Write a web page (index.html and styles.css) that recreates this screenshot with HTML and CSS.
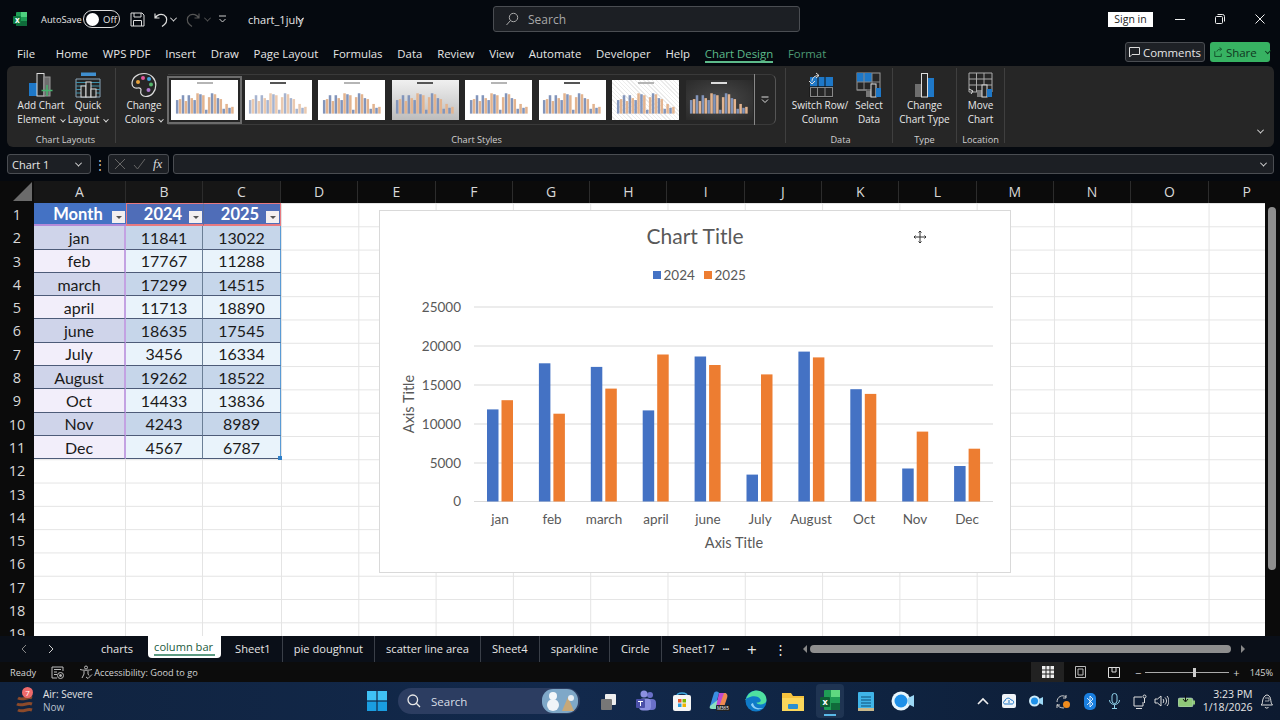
FILE: index.html
```html
<!DOCTYPE html>
<html lang="en">

<head>
    <meta charset="UTF-8" />
    <title>chart_1july - Excel</title>
    <link rel="stylesheet" href="styles.css">
</head>

<body>
    <!-- shared mini chart drawings for the style gallery -->
    <svg class="defs" width="0" height="0">
        <symbol id="bars" viewBox="0 0 64 26">
            <g class="b">
                <rect x="2" y="11" width="2.6" height="14" /><rect x="8" y="6" width="2.6" height="19" /><rect x="14" y="6" width="2.6" height="19" /><rect x="20" y="11" width="2.6" height="14" /><rect x="26" y="5" width="2.6" height="20" /><rect x="32" y="21" width="2.6" height="4" /><rect x="38" y="4" width="2.6" height="21" /><rect x="44" y="9" width="2.6" height="16" /><rect x="50" y="20" width="2.6" height="5" /><rect x="56" y="19" width="2.6" height="6" />
            </g>
            <g class="o">
                <rect x="5" y="10" width="2.6" height="15" /><rect x="11" y="12" width="2.6" height="13" /><rect x="17" y="9" width="2.6" height="16" /><rect x="23" y="4" width="2.6" height="21" /><rect x="29" y="6" width="2.6" height="19" /><rect x="35" y="8" width="2.6" height="17" /><rect x="41" y="5" width="2.6" height="20" /><rect x="47" y="10" width="2.6" height="15" /><rect x="53" y="15" width="2.6" height="10" /><rect x="59" y="18" width="2.6" height="7" />
            </g>
        </symbol>
    </svg>

    <!-- title bar -->
    <header class="titlebar">
        <svg class="xl-logo" width="14" height="14" viewBox="0 0 14 14"><rect x="3" y="0" width="11" height="14" rx="1" fill="#1f9d55" /><rect x="8" y="0" width="6" height="5" fill="#4fd17f" /><rect x="3" y="9" width="11" height="5" fill="#0f6b3a" /><rect x="0" y="4" width="8" height="8" rx="1" fill="#0d7a3f" /><text x="2" y="10.5" class="xl-x">x</text></svg>
        <span class="autosave">AutoSave</span>
        <span class="toggle"><i></i>Off</span>
        <svg class="qa-save" width="15" height="15" viewBox="0 0 15 15" fill="none" stroke="#ddd"><path d="M1 1h11l2 2v11H1z" /><path d="M4 1v4h7V1M3.500 14V8.500h8V14" /></svg>
        <svg class="qa-undo" width="15" height="15" viewBox="0 0 15 15" fill="none" stroke="#ddd" stroke-width="1.200"><path d="M1 1.500v4.500h4.500M1.300 6C3 2.500 7 1.500 10 3c3.500 2 3.500 7 .5 9.500L8 14.500" /></svg>
        <span class="chev qa-c1"></span>
        <svg class="qa-redo" width="15" height="15" viewBox="0 0 15 15" fill="none" stroke="#555" stroke-width="1.200"><path d="M14 1.500v4.500H9.500M13.700 6C12 2.500 8 1.500 5 3c-3.500 2-3.500 7-.5 9.500L7 14.500" /></svg>
        <span class="chev dim qa-c2"></span>
        <svg class="qa-more" width="9" height="8" viewBox="0 0 9 8" fill="none" stroke="#ccc"><path d="M1 1h7M1.500 4L4.500 7l3-3" /></svg>
        <span class="doc-name">chart_1july</span><span class="chev doc-chev"></span>
        <div class="search-box">
            <svg width="14" height="14" viewBox="0 0 14 14" fill="none" stroke="#aaa"><circle cx="8.500" cy="5.500" r="4.200" /><path d="M5.500 8.500L1.500 13" /></svg>
            <span>Search</span>
        </div>
        <span class="sign-in">Sign in</span>
        <div class="win-btns">
            <svg width="10" height="10" viewBox="0 0 10 10" stroke="#eee"><path d="M0 5.500h10" /></svg>
            <svg width="10" height="10" viewBox="0 0 10 10" fill="none" stroke="#eee"><rect x=".5" y="2.500" width="7" height="7" rx="1" /><path d="M2.500 .5h5a2 2 0 0 1 2 2v5" /></svg>
            <svg width="10" height="10" viewBox="0 0 10 10" stroke="#eee"><path d="M.5 .5l9 9M9.500 .5l-9 9" /></svg>
        </div>
    </header>

    <!-- ribbon tabs -->
    <nav class="tabs">
        <span>File</span><span>Home</span><span>WPS PDF</span><span>Insert</span><span>Draw</span><span>Page Layout</span><span>Formulas</span><span>Data</span><span>Review</span><span>View</span><span>Automate</span><span>Developer</span><span>Help</span>
        <span class="tab-on">Chart Design</span><span class="tab-format">Format</span>
        <div class="tab-actions">
            <span class="btn-comments"><svg width="11" height="11" viewBox="0 0 11 11" fill="none" stroke="#ddd"><path d="M.5 .5h10v7H3L.5 10z" /></svg>Comments</span>
            <span class="btn-share"><svg width="11" height="12" viewBox="0 0 11 12" fill="none" stroke="#0d3d20"><path d="M1 5v6.500h8V8M3.500 5.500C4 3.500 6 2.500 8 2.500M7 .5l2.500 2-2.500 2" /></svg>Share<span class="chev dark"></span></span>
        </div>
    </nav>

    <!-- ribbon -->
    <section class="ribbon">
        <div class="rgroup g-layouts">
            <div class="rbtns">
                <div class="rbtn w-add">
                    <svg width="26" height="26" viewBox="0 0 26 26" fill="none"><rect x="1" y="11" width="8" height="13" fill="#1e78c8" /><rect x="9" y="1.500" width="7" height="22.500" stroke="#ddd" /><rect x="16" y="5" width="6" height="19" fill="#6e6e6e" stroke="#999" /><path d="M19 13v11M13.500 18.500h11" stroke="#46b46e" stroke-width="1.500" /></svg>
                    <span>Add Chart<br>Element<i class="chev"></i></span>
                </div>
                <div class="rbtn w-quick">
                    <svg width="26" height="26" viewBox="0 0 26 26" fill="none"><rect x="6" y="0.500" width="15" height="3.500" fill="#3f8fd0" /><path d="M1 7h24v18H1z" stroke="#8aa4b8" /><path d="M1 10.500h24M1 14h24M1 17.500h24M1 21h24" stroke="#3f8fa8" /><rect x="6" y="14" width="5" height="11" fill="#262626" stroke="#ddd" /><rect x="11" y="10" width="5" height="15" fill="#262626" stroke="#ddd" /><rect x="16" y="17" width="5" height="8" fill="#262626" stroke="#ddd" /></svg>
                    <span>Quick<br>Layout<i class="chev"></i></span>
                </div>
            </div>
            <div class="rlabel">Chart Layouts</div>
        </div>
        <div class="rgroup g-colors">
            <div class="rbtns">
                <div class="rbtn w-colors">
                    <svg width="26" height="26" viewBox="0 0 26 26" fill="none"><path d="M13 1.500C6 1.500 1 6 1 11.500c0 4 3.500 5 6 4.500 2.500-.3 3.500 1 2.800 3-.7 2.500 1 5.500 5 5.500 6 0 10-5.500 10-11.500S20 1.500 13 1.500z" stroke="#ddd" stroke-width="1.200" /><circle cx="7" cy="10" r="2" fill="#e8a33d" /><circle cx="12" cy="6" r="2" fill="#e0559a" /><circle cx="18" cy="7" r="2" fill="#3fa0e0" /><circle cx="20" cy="12.500" r="2" fill="#55b56b" /><circle cx="17.500" cy="18" r="2" fill="#b07ad0" /></svg>
                    <span>Change<br>Colors<i class="chev"></i></span>
                </div>
            </div>
            <div class="rlabel"></div>
        </div>
        <div class="rgroup g-styles">
            <div class="gallery">
                <div class="thumb sel"><div class="t-head"></div><svg viewBox="0 0 64 26"><use href="#bars" /></svg></div>
                <div class="thumb pale"><div class="t-head bold"></div><svg viewBox="0 0 64 26"><use href="#bars" /></svg></div>
                <div class="thumb"><div class="t-head"></div><svg viewBox="0 0 64 26"><use href="#bars" /></svg></div>
                <div class="thumb grey"><div class="t-head bold"></div><svg viewBox="0 0 64 26"><use href="#bars" /></svg></div>
                <div class="thumb wide"><div class="t-head"></div><svg viewBox="0 0 64 26"><use href="#bars" /></svg></div>
                <div class="thumb"><div class="t-head bold"></div><svg viewBox="0 0 64 26"><use href="#bars" /></svg></div>
                <div class="thumb hatch"><div class="t-head"></div><svg viewBox="0 0 64 26"><use href="#bars" /></svg></div>
                <div class="thumb dark"><div class="t-head bold"></div><svg viewBox="0 0 64 26"><use href="#bars" /></svg></div>
                <div class="gal-more"><svg width="8" height="8" viewBox="0 0 8 8" fill="none" stroke="#ddd"><path d="M.5 1h7M1 3.500l3 3 3-3" /></svg></div>
            </div>
            <div class="rlabel">Chart Styles</div>
        </div>
        <div class="rgroup g-data">
            <div class="rbtns">
                <div class="rbtn w-switch">
                    <svg width="26" height="26" viewBox="0 0 26 26" fill="none"><rect x="3" y="5" width="23" height="20" fill="#1e78c8" /><path d="M3 15h23v10H3zM11 5v20M18 5v20M3 15h23" stroke="#111" /><rect x="3.500" y="15.500" width="22" height="9" fill="#262626" stroke="#888" /><path d="M10.500 15.500v9M18 15.500v9" stroke="#888" /><path d="M9 1l3 2.500-3 2.500M12 3.500c-4 0-7 2-7 6M2 9l3 3 3-3" stroke="#ddd" /></svg>
                    <span>Switch Row/<br>Column</span>
                </div>
                <div class="rbtn w-select">
                    <svg width="26" height="26" viewBox="0 0 26 26" fill="none"><rect x="1" y="1" width="23" height="17" stroke="#999" /><rect x="1" y="1" width="15" height="9" fill="#1e78c8" /><path d="M1 10h23M8 1v17M16 1v17M1 18h10" stroke="#888" /><rect x="10" y="19" width="5" height="6" fill="#777" /><rect x="15" y="12" width="5" height="13" fill="#262626" stroke="#ddd" /><rect x="20" y="16" width="5" height="9" fill="#1e78c8" /></svg>
                    <span>Select<br>Data</span>
                </div>
            </div>
            <div class="rlabel">Data</div>
        </div>
        <div class="rgroup g-type">
            <div class="rbtns">
                <div class="rbtn w-type">
                    <svg width="26" height="26" viewBox="0 0 26 26" fill="none"><rect x="3" y="12" width="6" height="13" fill="#6e6e6e" /><rect x="9.500" y="1.500" width="6" height="23.500" stroke="#ddd" /><rect x="16" y="6" width="6" height="19" fill="#1e78c8" /></svg>
                    <span>Change<br>Chart Type</span>
                </div>
            </div>
            <div class="rlabel">Type</div>
        </div>
        <div class="rgroup g-loc">
            <div class="rbtns">
                <div class="rbtn w-move">
                    <svg width="26" height="26" viewBox="0 0 26 26" fill="none"><path d="M1 1h23v19H1zM1 7h23M1 13h23M8.500 1v19M16 1v12" stroke="#aaa" /><path d="M1 17l4 2-2 3" stroke="#ddd" /><rect x="9" y="18" width="5" height="7" fill="#777" /><rect x="14" y="13" width="5" height="12" fill="#262626" stroke="#ddd" /><rect x="19" y="17" width="5" height="8" fill="#1e78c8" /></svg>
                    <span>Move<br>Chart</span>
                </div>
            </div>
            <div class="rlabel">Location</div>
        </div>
        <span class="chev collapse"></span>
    </section>

    <!-- formula bar -->
    <section class="formula">
        <div class="namebox">Chart 1<span class="chev"></span></div>
        <span class="fdots">⋮</span>
        <div class="fxbox">
            <svg width="12" height="12" viewBox="0 0 12 12" stroke="#666"><path d="M1 1l10 10M11 1L1 11" /></svg>
            <svg width="13" height="12" viewBox="0 0 13 12" stroke="#666" fill="none"><path d="M1 7l3.500 4L12 1" /></svg>
            <span class="fx">fx</span>
        </div>
        <div class="finput"><span class="chev"></span></div>
    </section>

    <!-- column headers -->
    <div class="colhead">
        <div class="corner"><i></i></div>
        <span class="c-a">A</span><span class="c-b">B</span><span class="c-c">C</span>
        <span>D</span><span>E</span><span>F</span><span>G</span><span>H</span><span>I</span><span>J</span><span>K</span><span>L</span><span>M</span><span>N</span><span>O</span><span>P</span>
    </div>

    <!-- sheet -->
    <main class="sheet">
        <div class="rowhead">
            <span>1</span><span>2</span><span>3</span><span>4</span><span>5</span><span>6</span><span>7</span><span>8</span><span>9</span><span>10</span><span>11</span><span>12</span><span>13</span><span>14</span><span>15</span><span>16</span><span>17</span><span>18</span><span>19</span>
        </div>
        <div class="cells">
            <div class="abc">
                <div class="tbl">
                    <div class="th">Month<b class="flt"></b></div><div class="th alt hb">2024<b class="flt"></b></div><div class="th alt hc">2025<b class="flt"></b></div>
                    <div class="a odd">jan</div><div class="b odd">11841</div><div class="c odd">13022</div>
                    <div class="a">feb</div><div class="b">17767</div><div class="c">11288</div>
                    <div class="a odd">march</div><div class="b odd">17299</div><div class="c odd">14515</div>
                    <div class="a">april</div><div class="b">11713</div><div class="c">18890</div>
                    <div class="a odd">june</div><div class="b odd">18635</div><div class="c odd">17545</div>
                    <div class="a">July</div><div class="b">3456</div><div class="c">16334</div>
                    <div class="a odd">August</div><div class="b odd">19262</div><div class="c odd">18522</div>
                    <div class="a">Oct</div><div class="b">14433</div><div class="c">13836</div>
                    <div class="a odd">Nov</div><div class="b odd">4243</div><div class="c odd">8989</div>
                    <div class="a">Dec</div><div class="b">4567</div><div class="c corner-cell">6787</div>
                </div>
            </div>
            <div class="rest"></div>

            <!-- chart floats over the cells -->
            <svg class="chart" width="632" height="363" viewBox="-1 0 632 363">
                <text x="315" y="34" class="ch-title">Chart Title</text>
                <rect x="273" y="61" width="8" height="8" fill="#4472c4" /><text x="283.500" y="70" class="ch-txt">2024</text>
                <rect x="324" y="61" width="8" height="8" fill="#ed7d31" /><text x="334.500" y="70" class="ch-txt">2025</text>
                <g stroke="#d9d9d9">
                    <path d="M94 97h519M94 136h519M94 175h519M94 214h519M94 253h519M94 291.500h519" />
                </g>
                <g class="ch-txt end">
                    <text x="81" y="102">25000</text><text x="81" y="141">20000</text><text x="81" y="180">15000</text><text x="81" y="219">10000</text><text x="81" y="258">5000</text><text x="81" y="296">0</text>
                </g>
                <g fill="#4472c4">
                    <rect x="107" y="199.400" width="11.500" height="92.100" /><rect x="158.900" y="153.300" width="11.500" height="138.200" /><rect x="210.800" y="156.900" width="11.500" height="134.600" /><rect x="262.700" y="200.400" width="11.500" height="91.100" /><rect x="314.600" y="146.500" width="11.500" height="145" /><rect x="366.500" y="264.600" width="11.500" height="26.900" /><rect x="418.400" y="141.600" width="11.500" height="149.900" /><rect x="470.300" y="179.200" width="11.500" height="112.300" /><rect x="522.200" y="258.500" width="11.500" height="33" /><rect x="574.100" y="256" width="11.500" height="35.500" />
                </g>
                <g fill="#ed7d31">
                    <rect x="121.500" y="190.200" width="11.500" height="101.300" /><rect x="173.400" y="203.700" width="11.500" height="87.800" /><rect x="225.300" y="178.600" width="11.500" height="112.900" /><rect x="277.200" y="144.500" width="11.500" height="147" /><rect x="329.100" y="155" width="11.500" height="136.500" /><rect x="381" y="164.400" width="11.500" height="127.100" /><rect x="432.900" y="147.400" width="11.500" height="144.100" /><rect x="484.800" y="183.900" width="11.500" height="107.600" /><rect x="536.700" y="221.600" width="11.500" height="69.900" /><rect x="588.600" y="238.700" width="11.500" height="52.800" />
                </g>
                <g class="ch-txt mid">
                    <text x="120" y="314">jan</text><text x="172" y="314">feb</text><text x="224" y="314">march</text><text x="276" y="314">april</text><text x="328" y="314">june</text><text x="380" y="314">July</text><text x="431" y="314">August</text><text x="484" y="314">Oct</text><text x="535" y="314">Nov</text><text x="587" y="314">Dec</text>
                </g>
                <text x="354" y="338" class="ch-axis">Axis Title</text>
                <text class="ch-axis" transform="translate(34 194) rotate(-90)">Axis Title</text>
                <g transform="translate(534 21)" fill="none" stroke="#333">
                    <path d="M6 0v12M0 6h12M4.500 1.500L6 0l1.500 1.500M4.500 10.500L6 12l1.500-1.500M1.500 4.500L0 6l1.500 1.500M10.500 4.500L12 6l-1.500 1.500" />
                </g>
            </svg>
        </div>
        <div class="vscroll"><i></i></div>
    </main>

    <!-- sheet tabs -->
    <div class="sheetbar">
        <span class="nav-arrows"><svg width="6" height="10" viewBox="0 0 6 10" fill="none" stroke="#888"><path d="M5 1L1 5l4 4" /></svg><svg width="6" height="10" viewBox="0 0 6 10" fill="none" stroke="#ccc"><path d="M1 1l4 4-4 4" /></svg></span>
        <div class="stabs">
            <span class="stab">charts</span>
            <span class="stab on">column bar</span>
            <span class="stab">Sheet1</span>
            <span class="stab">pie doughnut</span>
            <span class="stab">scatter line area</span>
            <span class="stab">Sheet4</span>
            <span class="stab">sparkline</span>
            <span class="stab">Circle</span>
            <span class="stab last">Sheet17</span>
        </div>
        <span class="s-dots">•••</span>
        <span class="s-plus">+</span>
        <span class="s-more">⋮</span>
        <div class="hscroll"><b class="ar-l"></b><i></i><b class="ar-r"></b></div>
    </div>

    <!-- status bar -->
    <footer class="status">
        <span class="st-ready">Ready</span>
        <svg class="st-macro" width="13" height="13" viewBox="0 0 13 13" fill="none" stroke="#bbb"><path d="M1 1h11v4M1 1v11h5M3 3.500h7M3 6h3M3 8.500h3" /><circle cx="9.500" cy="9.500" r="3" /><circle cx="9.500" cy="9.500" r="1" fill="#bbb" /></svg>
        <svg class="st-acc" width="14" height="14" viewBox="0 0 14 14" fill="none" stroke="#bbb"><circle cx="7" cy="2.500" r="1.500" /><path d="M1 4.500c3 1 9 1 12 0M5 6v3l-2 4M9 6v3l1 1.500M7 12l2 1.500 4-4" /></svg>
        <span class="st-acc-txt">Accessibility: Good to go</span>
        <div class="st-right">
            <span class="view on"><svg width="12" height="12" viewBox="0 0 12 12" fill="#eee"><path d="M0 0h12v12H0z" /><path d="M4 0v12M8 0v12M0 4h12M0 8h12" stroke="#222" /></svg></span>
            <span class="view"><svg width="11" height="12" viewBox="0 0 11 12" fill="none" stroke="#bbb"><path d="M.5 .5h10v11H.5z" /><path d="M3 3h5v6H3z" /></svg></span>
            <span class="view"><svg width="12" height="11" viewBox="0 0 12 11" fill="none" stroke="#ddd"><path d="M.5 .5h11v10H.5zM4 .5v4.500h4V.5" /></svg></span>
            <div class="zoomer"><span>−</span><div class="slider"><i></i></div><span>+</span></div>
            <span class="pct">145%</span>
        </div>
    </footer>

    <!-- windows taskbar -->
    <div class="taskbar">
        <div class="weather">
            <div class="w-icon">
                <svg width="20" height="24" viewBox="0 0 20 24" fill="none" stroke="#8c4a2a" stroke-width="3"><path d="M2 6c5 3 10-2 14 0M1 12c5 3 10-2 15 0M2 18c5 3 9-2 14 0" /></svg>
                <b>7</b>
            </div>
            <div class="w-txt">Air: Severe<small>Now</small></div>
        </div>
        <svg class="winlogo" width="20" height="20" viewBox="0 0 20 20"><g fill="#3fc1f5"><rect width="9.400" height="9.400" /><rect x="10.600" width="9.400" height="9.400" /></g><g fill="#1a9de0"><rect y="10.600" width="9.400" height="9.400" /><rect x="10.600" y="10.600" width="9.400" height="9.400" /></g></svg>
        <div class="tsearch">
            <svg width="14" height="14" viewBox="0 0 14 14" fill="none" stroke="#e8e8e8" stroke-width="1.300"><circle cx="5.800" cy="5.800" r="4.800" /><path d="M9.300 9.300L13 13" /></svg>
            <span>Search</span>
            <svg class="ts-pic" width="36" height="24" viewBox="0 0 36 24"><rect width="36" height="24" rx="11" fill="#7fa8c8" /><circle cx="11" cy="16" r="6" fill="#f0f4f8" /><circle cx="11" cy="7" r="4" fill="#f4f7fa" /><path d="M20 22l6-14 6 14z" fill="#c8a878" /><circle cx="29" cy="9" r="3" fill="#e8eef4" /></svg>
        </div>
        <div class="apps">
            <svg width="18" height="18" viewBox="0 0 18 18"><rect x="5" y="2" width="11" height="11" rx="1" fill="#eee" /><rect x="1" y="7" width="11" height="11" rx="1" fill="#777" /></svg>
            <svg width="20" height="22" viewBox="0 0 20 22"><circle cx="14" cy="5" r="3" fill="#6a70c8" /><rect x="9" y="9" width="11" height="11" rx="4" fill="#6a70c8" /><circle cx="8" cy="4" r="3.500" fill="#8b90e0" /><rect x="3" y="8.500" width="12" height="12" rx="4" fill="#8b90e0" /><rect x="0" y="9" width="9" height="9" rx="1" fill="#4b50a8" /><path d="M2 11.500h5M4.500 11.500V16" stroke="#fff" /></svg>
            <svg width="20" height="22" viewBox="0 0 20 22"><path d="M5 6c0-4 10-4 10 0" fill="none" stroke="#3fa9e0" stroke-width="1.500" /><rect x="1" y="5" width="18" height="16" rx="2" fill="#f5f5f5" /><rect x="6" y="9" width="3.500" height="3.500" fill="#e8562a" /><rect x="10.500" y="9" width="3.500" height="3.500" fill="#7fba00" /><rect x="6" y="13.500" width="3.500" height="3.500" fill="#2a9de0" /><rect x="10.500" y="13.500" width="3.500" height="3.500" fill="#f0b400" /></svg>
            <svg width="22" height="22" viewBox="0 0 22 22"><path d="M2 16L6 3c1-2 4-2 5 0l-4 15z" fill="#3a8ee0" /><path d="M2 16c-1 2 0 3 2 3h4l3-10z" fill="#8be0c0" /><path d="M11 3h7l-4 14H8z" fill="#c04ad0" /><path d="M16 3c3 0 4 2 3 5l-3 9h-5z" fill="#f08a50" /><rect x="8" y="15" width="14" height="6" rx="1" fill="#222" /><text x="9" y="20" class="m365">M365</text></svg>
            <svg width="22" height="22" viewBox="0 0 22 22"><circle cx="11" cy="11" r="10.500" fill="#0f7ac8" /><path d="M1 10C2 4 7 .5 11 .5c6 0 10.500 4 10.500 9.500 0 3-3 4.500-6 4.500-2 0-4-1-4-2 3 0 5-1 4-3-1-3-6-4-9-3-3 1-5.500 2-6.500 3.500z" fill="#4fe0a0" /><path d="M6 15c2 4 7 6 12 3-4 1-9 0-10-5-1 0-2 1-2 2z" fill="#8fd0f8" /></svg>
            <svg width="22" height="20" viewBox="0 0 22 20"><path d="M0 2h9l2 3h11v15H0z" fill="#f5c23e" /><rect y="7" width="22" height="13" fill="#fbd75b" /><rect x="6" y="13" width="10" height="5" rx="1" fill="#2a8fd0" /></svg>
            <span class="app-on"><svg width="20" height="22" viewBox="0 0 20 22"><rect x="4" y="1" width="16" height="20" rx="1" fill="#1f9d55" /><rect x="11" y="1" width="9" height="7" fill="#5fd880" /><rect x="11" y="14" width="9" height="7" fill="#0f6b3a" /><rect x="0" y="8" width="10" height="10" rx="1" fill="#0d5e33" /><text x="2.500" y="16" class="xl-x big">x</text></svg></span>
            <svg width="18" height="22" viewBox="0 0 18 22"><rect x="1" y="2" width="16" height="19" rx="1" fill="#3fb4e8" /><rect x="1" y="18" width="16" height="3" fill="#c8b88a" /><path d="M4 7h10M4 10h10M4 13h10M4 16h10" stroke="#0d4f78" /></svg>
            <svg width="24" height="20" viewBox="0 0 24 20"><circle cx="10" cy="10" r="9.500" fill="#e8f6fc" /><circle cx="10" cy="10" r="6.500" fill="#1e90e8" /><path d="M17 7l6-3v12l-6-3z" fill="#9cd8f5" /></svg>
        </div>
        <div class="tray">
            <svg width="12" height="8" viewBox="0 0 12 8" fill="none" stroke="#eee" stroke-width="1.600"><path d="M1 7l5-5 5 5" /></svg>
            <svg width="14" height="14" viewBox="0 0 14 14"><rect width="14" height="14" rx="2" fill="#f0f4f8" /><path d="M3 10c-2 0-2-3 0-3 0-3 5-4 6-1 3-.5 3.500 4 1 4zM7 6v3" fill="none" stroke="#1e78c8" /></svg>
            <svg width="14" height="12" viewBox="0 0 14 12"><circle cx="5.500" cy="6" r="5.500" fill="#cfeaf8" /><circle cx="5.500" cy="6" r="3.500" fill="#1e90e8" /><path d="M10 4l4-2v8l-4-2z" fill="#9cd8f5" /></svg>
            <svg width="15" height="15" viewBox="0 0 15 15" fill="none" stroke="#ccc"><path d="M1 8C1 3 6 0 10 3M8 14c-3 0-6-1-7-4" /><path d="M10 1v3H7M1 14v-3h3" /><circle cx="10.500" cy="10.500" r="3.500" fill="#f08c1e" stroke="none" /></svg>
            <svg width="12" height="17" viewBox="0 0 12 17"><rect width="12" height="17" rx="5" fill="#1a7fe0" /><path d="M3 5l6 6-3 3V3l3 3-6 6" fill="none" stroke="#fff" stroke-width=".8" /></svg>
            <svg width="11" height="16" viewBox="0 0 11 16" fill="none" stroke="#8fd0e8"><rect x="3" y=".5" width="5" height="10" rx="2.500" /><path d="M.5 7c0 6 10 6 10 0M5.500 12v3.500M3 15.500h5" /></svg>
            <svg width="14" height="15" viewBox="0 0 14 15" fill="none" stroke="#ddd"><path d="M9 3H1v9h9V8M3 14.500h6" /><circle cx="11.500" cy="2.500" r="1.500" /><path d="M11.500 4v5" /></svg>
            <svg class="t-speak" width="15" height="12" viewBox="0 0 15 12" fill="none" stroke="#ddd"><path d="M1 4h2.500L7 1v10L3.500 8H1zM9 4c1 1 1 3 0 4M11 2.500c2 2 2 5 0 7M13 1c2.500 3 2.500 7 0 10" /></svg>
            <svg class="t-batt" width="17" height="12" viewBox="0 0 17 12"><rect y="3" width="15" height="9" rx="2" fill="#8fc878" stroke="#cde" stroke-width=".5" /><rect x="15" y="5.500" width="2" height="4" fill="#8fc878" /><path d="M7.500 0v6M5 4l2.500 3L10 4" fill="none" stroke="#111" /></svg>
            <div class="clock">3:23 PM<br>1/18/2026</div>
            <svg width="13" height="15" viewBox="0 0 13 15" fill="none" stroke="#ddd"><path d="M1 11c2-1 1-3 2-6s3-4 4-4 3 1 3.500 3.500c.5 3 .5 5 2 6.500zM5 13c.5 1.500 3 1.500 3.500 0" /><path d="M5 4h4v3H5" stroke-width=".7" /></svg>
        </div>
    </div>
</body>

</html>
```

FILE: styles.css
```css
* {
    margin: 0;
    padding: 0;
    box-sizing: border-box;
}

html,
body {
    width: 1280px;
    height: 720px;
    overflow: hidden;
}

body {
    background: #05090f;
    color: #e6e6e6;
    font-family: "Open Sans", "Liberation Sans", sans-serif;
    font-size: 11.5px;
    display: flex;
    flex-direction: column;
}

.defs {
    position: absolute;
}

.chev {
    display: inline-block;
    width: 5px;
    height: 5px;
    border-right: 1px solid #ddd;
    border-bottom: 1px solid #ddd;
    transform: rotate(45deg) translate(-1px, -1px);
}

.chev.dim {
    border-color: #555;
}

.chev.dark {
    border-color: #0d3d20;
    margin-left: 6px;
}

/* title bar */
.titlebar {
    height: 38px;
    flex: none;
    display: flex;
    align-items: center;
    padding-left: 13px;
    font-size: 10.5px;
}

.xl-x {
    font: bold 8px "Open Sans", sans-serif;
    fill: #fff;
}

.xl-x.big {
    font-size: 9px;
}

.autosave {
    margin-left: 14px;
    width: 42px;
    font-size: 9.300px;
    white-space: nowrap;
}

.toggle {
    margin-left: 0;
    width: 37px;
    height: 18px;
    border: 1px solid #ddd;
    border-radius: 9px;
    display: flex;
    align-items: center;
    gap: 4px;
    padding-left: 2px;
    font-size: 9.500px;
}

.toggle i {
    width: 13px;
    height: 13px;
    border-radius: 50%;
    background: #fff;
}

.qa-save {
    margin-left: 10px;
}

.qa-undo {
    margin-left: 9px;
}

.qa-c1 {
    margin-left: 2px;
}

.qa-redo {
    margin-left: 9px;
}

.qa-c2 {
    margin-left: 5px;
}

.qa-more {
    margin-left: 8px;
}

.doc-name {
    margin-left: 21px;
    width: 51px;
    font-size: 11px;
    white-space: nowrap;
}

.doc-chev {
    margin-left: -1px;
}

.search-box {
    margin-left: 190px;
    width: 307px;
    height: 26px;
    background: #1c1f24;
    border: 1px solid #4a4d52;
    border-radius: 3px;
    display: flex;
    align-items: center;
    gap: 9px;
    padding-left: 11px;
    color: #a8a8a8;
    font-size: 12px;
}

.sign-in {
    margin-left: 308px;
    width: 45px;
    height: 15px;
    background: #fff;
    color: #222;
    text-align: center;
    line-height: 15px;
    font-size: 10.500px;
}

.win-btns {
    display: flex;
    margin-left: 22px;
    gap: 30px;
}

/* ribbon tabs */
.tabs {
    height: 28px;
    flex: none;
    display: flex;
    align-items: center;
    gap: 14.800px;
    padding-left: 17px;
    padding-top: 2px;
    font-size: 11.400px;
    white-space: nowrap;
}

.tabs > span:first-child {
    margin-right: 6px;
}

.tab-on {
    color: #5dbb8b;
    padding-top: 3px;
    border-bottom: 2px solid #5dbb8b;
    line-height: 15px;
}

.tab-format {
    color: #4d9a74;
}

.tab-actions {
    margin-left: auto;
    margin-right: 10px;
    display: flex;
    gap: 5px;
    margin-top: -2px;
}

.btn-comments,
.btn-share {
    height: 20px;
    border-radius: 3px;
    display: flex;
    align-items: center;
    gap: 3px;
}

.btn-comments {
    width: 80px;
    border: 1px solid #4a4d52;
    background: #1e2126;
    justify-content: center;
}

.btn-share {
    width: 60px;
    background: #37b262;
    color: #10361f;
    padding-left: 4px;
    font-size: 11.500px;
}

/* ribbon */
.ribbon {
    height: 81px;
    flex: none;
    margin: 0 6px 0 7px;
    background: #262626;
    border-radius: 6px;
    display: flex;
    position: relative;
}

.rgroup {
    display: flex;
    flex-direction: column;
    border-right: 1px solid #3f3f3f;
    margin: 2px 0 4px;
}

.rbtns {
    display: flex;
    flex: 1;
}

.rlabel {
    height: 15px;
    margin-bottom: -4px;
    flex: none;
    text-align: center;
    font-size: 9.200px;
    line-height: 15px;
    color: #d0d0d0;
}

.rbtn {
    display: flex;
    flex-direction: column;
    align-items: center;
    padding-top: 4px;
    font-size: 10px;
    line-height: 14px;
    text-align: center;
    white-space: nowrap;
    color: #e8e8e8;
}

.rbtn .chev {
    margin-left: 5px;
    width: 4px;
    height: 4px;
}

.g-layouts {
    width: 109px;
    padding-left: 9px;
}

.w-add {
    width: 50px;
}

.w-quick {
    width: 44px;
}

.g-colors {
    width: 53px;
    border-right: none;
}

.g-colors .w-colors {
    width: 50px;
    margin-left: 3px;
}

.g-styles {
    width: 618px;
    border-right: 1px solid #3f3f3f;
    margin-left: -1px;
}

.gallery {
    flex: none;
    display: flex;
    align-items: center;
    height: 51px;
    margin-top: 6px;
    margin-bottom: auto;
    gap: 6.500px;
    border: 1px solid #555;
    border-left: none;
    border-top-color: #3a3a3a;
    border-bottom-color: #3a3a3a;
    border-radius: 0 6px 6px 0;
    width: 608px;
    position: relative;
}

.thumb {
    width: 67px;
    height: 40px;
    background: #fff;
    flex: none;
    padding: 2px 2px 3px;
    display: flex;
    flex-direction: column;
    align-items: center;
    gap: 2px;
}

.thumb.sel {
    outline: 2px solid #6c6c6c;
    outline-offset: 2px;
    margin-left: 3px;
}

.t-head {
    width: 16px;
    height: 2px;
    background: #b5b5b5;
    flex: none;
    margin-bottom: 3px;
}

.t-head.bold {
    background: #555;
}

.thumb svg {
    width: 62px;
    height: 26px;
    flex: none;
}

.b {
    fill: #8295bb;
}

.o {
    fill: #e3b48f;
}

.thumb.pale svg {
    opacity: .7;
}

.thumb.wide .b rect,
.thumb.wide .o rect {
    width: 3px;
}

.thumb.grey {
    background: linear-gradient(#f0f0f0, #bdbdbd);
}

.thumb.hatch {
    background: repeating-linear-gradient(45deg, #fff 0 2px, #ececec 2px 3px);
}

.thumb.dark {
    background: radial-gradient(#4a4a4a, #2a2a2a);
}

.thumb.dark .t-head {
    background: #ddd;
}

.thumb.dark .b {
    fill: #5a78b4;
}

.thumb.dark .o {
    fill: #d98a4a;
}

.gal-more {
    position: absolute;
    right: 0;
    top: -1px;
    bottom: -1px;
    width: 21px;
    border-left: 1px solid #888;
    display: flex;
    align-items: center;
    justify-content: center;
}

.g-data {
    width: 107px;
    padding-left: 3px;
}

.w-switch {
    width: 62px;
}

.w-select {
    width: 36px;
}

.g-type {
    width: 64px;
}

.w-type {
    width: 63px;
}

.g-loc {
    width: 48px;
}

.w-move {
    width: 47px;
}

.collapse {
    position: absolute;
    right: 11px;
    bottom: 13px;
}

/* formula bar */
.formula {
    height: 20px;
    flex: none;
    margin: 7px 6px 7px 7px;
    display: flex;
    align-items: center;
}

.namebox {
    width: 84px;
    height: 20px;
    background: #1c1f24;
    border: 1px solid #4a4d52;
    border-radius: 3px;
    padding: 0 9px 0 4px;
    display: flex;
    align-items: center;
    justify-content: space-between;
    font-size: 11px;
}

.fdots {
    width: 17px;
    text-align: center;
    color: #ccc;
    font-size: 12px;
}

.fxbox {
    width: 61px;
    height: 20px;
    background: #1c1f24;
    border: 1px solid #4a4d52;
    border-radius: 3px;
    display: flex;
    align-items: center;
    padding-left: 5px;
    gap: 7px;
}

.fx {
    font: italic 13px "Liberation Serif", serif;
    color: #ddd;
}

.finput {
    flex: 1;
    height: 20px;
    margin-left: 4px;
    background: #1c1f24;
    border: 1px solid #4a4d52;
    border-radius: 3px;
    display: flex;
    align-items: center;
    justify-content: flex-end;
    padding-right: 7px;
}

/* column headers */
.colhead {
    height: 22px;
    flex: none;
    background: #0b0b0b;
    display: flex;
    overflow: hidden;
    font-size: 14px;
    color: #d8d8d8;
}

.colhead span {
    width: 77.300px;
    flex: none;
    text-align: center;
    line-height: 22px;
    border-right: 1px solid #2c2c2c;
}

.colhead .c-a {
    width: 92px;
    background: #161616;
}

.colhead .c-b {
    width: 77px;
    background: #161616;
}

.colhead .c-c {
    width: 78px;
    background: #161616;
}

.corner {
    width: 34px;
    flex: none;
    position: relative;
}

.corner i {
    position: absolute;
    right: 2px;
    bottom: 2px;
    width: 0;
    height: 0;
    border-left: 19px solid transparent;
    border-bottom: 19px solid #6b6b6b;
}

/* sheet */
.sheet {
    height: 433px;
    flex: none;
    display: flex;
    background: #fff;
}

.rowhead {
    width: 34px;
    flex: none;
    background: #0b0b0b;
    overflow: hidden;
    display: flex;
    flex-direction: column;
    font-size: 14.500px;
    color: #d8d8d8;
}

.rowhead span {
    height: 23.300px;
    flex: none;
    line-height: 23.300px;
    text-align: center;
}

.cells {
    flex: 1;
    display: flex;
    position: relative;
    overflow: hidden;
}

.abc {
    width: 247px;
    flex: none;
    background:
        linear-gradient(to right, transparent 91px, #e4e4e4 91px, #e4e4e4 92px, transparent 92px, transparent 168px, #e4e4e4 168px, #e4e4e4 169px, transparent 169px),
        linear-gradient(to bottom, #e4e4e4 1px, transparent 1px) 0 0 / 100% 23.300px;
}

.rest {
    flex: 1;
    background:
        linear-gradient(to right, #e4e4e4 1px, transparent 1px) 0 0 / 77.300px 100%,
        linear-gradient(to bottom, #e4e4e4 1px, transparent 1px) 0 0 / 100% 23.300px;
}

.tbl {
    display: grid;
    grid-template-columns: 92px 77px 78px;
    grid-auto-rows: 23.300px;
    font-family: Lato, "Liberation Sans", sans-serif;
    font-size: 16px;
    color: #1a1a1a;
}

.tbl > div {
    display: flex;
    align-items: center;
    justify-content: center;
    position: relative;
    border-bottom: 1px solid #4d5b78;
}

.tbl .th {
    background: #4472c4;
    color: #fff;
    font-weight: bold;
    font-size: 16.500px;
    border-bottom: 2px solid #e87a80;
    padding-right: 4px;
}

.tbl .th:first-child {
    border-bottom-color: #b48ad8;
}

.tbl .th.alt {
    background: #4f6db8;
    border-top: 1px solid #e87a80;
}

.tbl .hb {
    border-left: 1px solid #e87a80;
}

.tbl .hc {
    border-right: 1px solid #e87a80;
    border-left: 1px solid #5a6c9a;
}

.flt {
    position: absolute;
    right: 1px;
    bottom: 1px;
    width: 13px;
    height: 12px;
    background: #f4f0f0;
}

.flt::after {
    content: "";
    position: absolute;
    left: 4px;
    top: 5px;
    border: 3px solid transparent;
    border-top-color: #555;
}

.a {
    background: #f2eefa;
    border-right: 2px solid #c3a2e2;
}

.a.odd {
    background: #cfd4ea;
}

.b,
.c {
    background: #e9f3fb;
}

.b.odd,
.c.odd {
    background: #c6d6ea;
}

.b {
    border-right: 1px solid #6b7f96;
}

.c {
    border-right: 1px solid #5a9bd5;
}

.corner-cell::after {
    content: "";
    position: absolute;
    right: -2px;
    bottom: -2px;
    width: 4px;
    height: 4px;
    background: #2f7fc8;
}

/* chart */
.chart {
    position: absolute;
    left: 345px;
    top: 7px;
    background: #fff;
    outline: 1px solid #d9d9d9;
    outline-offset: -1px;
    font-family: Lato, "Liberation Sans", sans-serif;
}

.ch-title {
    font-size: 21px;
    fill: #595959;
    text-anchor: middle;
}

.ch-txt {
    font-size: 13.500px;
    fill: #595959;
}

.ch-txt.end {
    text-anchor: end;
}

.ch-txt.mid {
    text-anchor: middle;
}

.ch-axis {
    font-size: 14.500px;
    fill: #595959;
    text-anchor: middle;
}

.vscroll {
    width: 15px;
    flex: none;
    background: #0b0b0b;
    padding: 4px 3px 0 3px;
}

.vscroll i {
    display: block;
    width: 8px;
    height: 363px;
    background: #8e8e8e;
    border-radius: 4px;
}

/* sheet tabs */
.sheetbar {
    height: 26px;
    flex: none;
    display: flex;
    align-items: center;
    background: #0a0f18;
    font-size: 11.100px;
    white-space: nowrap;
}

.nav-arrows {
    width: 101px;
    display: flex;
    gap: 21px;
    padding-left: 21px;
    flex: none;
}

.stabs {
    display: flex;
    align-items: flex-start;
    height: 26px;
    flex: none;
}

.stab {
    height: 26px;
    line-height: 25px;
    padding: 0 11px;
    border-right: 1px solid #3a3f48;
}

.stab:first-child {
    padding: 0 15px 0 0;
    border-right: none;
}

.stab.on {
    height: 22px;
    background: #fff;
    color: #1c5a3c;
    padding: 0 6px;
    width: 73px;
    border: none;
    border-radius: 0 0 4px 4px;
    position: relative;
    line-height: 22px;
    margin-right: 3px;
}

.stab.on::after {
    content: "";
    position: absolute;
    left: 6px;
    right: 6px;
    bottom: 2px;
    height: 2px;
    background: #5d9b82;
}

.stab.last {
    border: none;
    padding-right: 0;
}

.s-dots {
    margin-left: 8px;
    font-size: 7px;
    letter-spacing: -.5px;
}

.s-plus {
    margin-left: 18px;
    font-size: 17px;
}

.s-more {
    margin-left: 17px;
    font-size: 13px;
}

.hscroll {
    margin-left: 15px;
    flex: 1;
    display: flex;
    align-items: center;
    gap: 3px;
    padding-right: 31px;
}

.hscroll i {
    flex: 1;
    height: 8px;
    background: #8e8e8e;
    border-radius: 4px;
}

.ar-l,
.ar-r {
    width: 0;
    height: 0;
    border: 4px solid transparent;
}

.ar-l {
    border-right-color: #888;
    margin-left: -3px;
}

.ar-r {
    border-left-color: #888;
    margin-left: 7px;
}

/* status bar */
.status {
    height: 20px;
    flex: none;
    background: #0c0c0c;
    display: flex;
    align-items: center;
    padding-left: 10px;
    font-size: 9.200px;
    color: #d5d5d5;
    white-space: nowrap;
}

.st-macro {
    margin-left: 15px;
}

.st-acc {
    margin-left: 15px;
}

.st-acc-txt {
    margin-left: 1px;
}

.st-right {
    margin-left: auto;
    display: flex;
    align-items: center;
}

.view {
    width: 33px;
    height: 20px;
    display: flex;
    align-items: center;
    justify-content: center;
}

.view.on {
    background: #222;
}

.zoomer {
    margin-left: 5px;
    display: flex;
    align-items: center;
    gap: 4px;
    font-size: 11px;
}

.slider {
    width: 84px;
    height: 1px;
    background: #aaa;
    position: relative;
}

.slider i {
    position: absolute;
    left: 48px;
    top: -4px;
    width: 3px;
    height: 9px;
    background: #ccc;
}

.pct {
    margin-left: 10px;
    margin-right: 7px;
}

/* windows taskbar */
.taskbar {
    height: 38px;
    flex: none;
    background: linear-gradient(to right, #10233f, #12294c 45%, #0f2340 70%, #0d1a30);
    display: flex;
    align-items: center;
    white-space: nowrap;
}

.weather {
    width: 367px;
    flex: none;
    display: flex;
    align-items: center;
    padding-left: 16px;
    font-size: 10px;
}

.w-icon {
    width: 27px;
    height: 26px;
    position: relative;
    padding-top: 4px;
}

.w-icon b {
    position: absolute;
    left: 6px;
    top: -1px;
    width: 11px;
    height: 11px;
    border-radius: 50%;
    background: #ef6a6a;
    color: #fff;
    font-size: 8px;
    font-weight: normal;
    text-align: center;
    line-height: 11px;
}

.w-txt {
    line-height: 13px;
}

.w-txt small {
    display: block;
    font-size: 10px;
    color: #b8c0cc;
}

.tsearch {
    margin-left: 11px;
    width: 182px;
    height: 26px;
    background: #2c3d61;
    border-radius: 13px;
    display: flex;
    align-items: center;
    padding-left: 9px;
    gap: 10px;
    font-size: 11.500px;
    color: #d8dde6;
}

.ts-pic {
    margin-left: auto;
    margin-right: 2px;
}

.apps {
    width: 334px;
    flex: none;
    display: grid;
    grid-template-columns: repeat(9, 36.800px);
    justify-items: center;
    align-items: center;
    margin-left: 10.500px;
}

.app-on {
    width: 28px;
    height: 34px;
    background: #1f3452;
    border-radius: 4px;
    display: flex;
    align-items: center;
    justify-content: center;
    border-bottom: 2px solid #1f3452;
    position: relative;
}

.app-on::after {
    content: "";
    position: absolute;
    left: 8px;
    right: 8px;
    bottom: 0;
    height: 2px;
    background: #5ab8e8;
}

.m365 {
    font: 4.500px "Open Sans", sans-serif;
    fill: #fff;
}

.tray {
    flex: 1;
    display: flex;
    align-items: center;
    gap: 13px;
    padding-left: 52px;
}

.tray > svg {
    flex: none;
}

.t-speak {
    margin-left: -6px;
}

.t-batt {
    margin-left: -4px;
}

.clock {
    width: 50px;
    text-align: right;
    font-size: 10.500px;
    line-height: 13.500px;
    margin-left: -5px;
    margin-right: -6px;
}
```
